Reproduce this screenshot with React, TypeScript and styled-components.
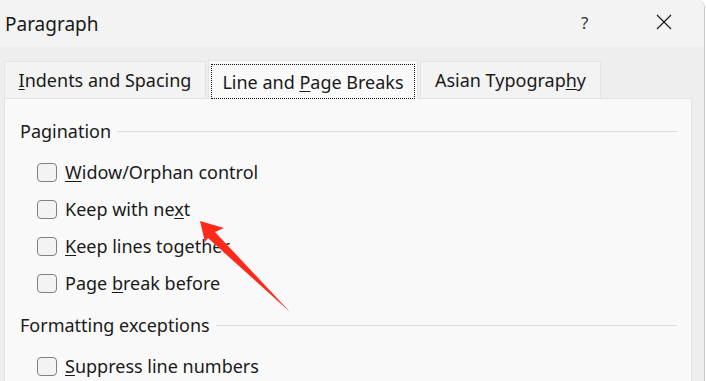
import React from "react";
import styled, { createGlobalStyle } from "styled-components";

const GlobalStyle = createGlobalStyle`
  html, body {
    margin: 0;
    padding: 0;
    background: #ffffff;
    overflow: hidden;
  }
  body {
    font-family: "Noto Sans", "Open Sans", sans-serif;
    color: #1a1a1a;
  }
`;

type Item = { before: string; key: string; after: string };

const pagination: Item[] = [
  { before: "", key: "W", after: "idow/Orphan control" },
  { before: "Keep with ne", key: "x", after: "t" },
  { before: "", key: "K", after: "eep lines together" },
  { before: "Page ", key: "b", after: "reak before" },
];

const exceptions: Item[] = [
  { before: "", key: "S", after: "uppress line numbers" },
];

const Label = ({ item }: { item: Item }) => (
  <span>
    {item.before}
    <U>{item.key}</U>
    {item.after}
  </span>
);

const App = () => {
  return (
    <Window>
      <GlobalStyle />
      <TitleBar>
        <Title>Paragraph</Title>
        <Help>?</Help>
        <Close>
          <svg width="16" height="16" viewBox="0 0 16 16">
            <path d="M1 1 L15 15 M15 1 L1 15" stroke="#1a1a1a" strokeWidth="1.2" fill="none" />
          </svg>
        </Close>
      </TitleBar>
      <Body>
        <Tabs>
          <Tab $width={202}>
            <Label item={{ before: "", key: "I", after: "ndents and Spacing" }} />
          </Tab>
          <ActiveTab>
            <Focus>
              <Label item={{ before: "Line and ", key: "P", after: "age Breaks" }} />
            </Focus>
          </ActiveTab>
          <Tab $width={181}>
            <Label item={{ before: "Asian Typograp", key: "h", after: "y" }} />
          </Tab>
        </Tabs>
        <Panel>
          <GroupHeader>
            <span>Pagination</span>
            <Rule />
          </GroupHeader>
          <List>
            {pagination.map((it, i) => (
              <Row key={i}>
                <Box />
                <Label item={it} />
              </Row>
            ))}
          </List>
          <GroupHeader $top={18}>
            <span>Formatting exceptions</span>
            <Rule />
          </GroupHeader>
          <List>
            {exceptions.map((it, i) => (
              <Row key={i}>
                <Box />
                <Label item={it} />
              </Row>
            ))}
          </List>
        </Panel>
      </Body>
      <Arrow width="706" height="381" viewBox="0 0 706 381">
        <polygon
          points="200,221 224,228 215,232 290,312 208,238 205,242"
          fill="#fd2a1c"
        />
      </Arrow>
    </Window>
  );
};

export default App;

const Window = styled.div`
  position: relative;
  width: 704px;
  height: 381px;
  border-right: 1px solid #c9c9c9;
  border-top-right-radius: 8px;
  overflow: hidden;
  background: #eeeeee;
`;

const TitleBar = styled.div`
  height: 47px;
  background: #f3f3f3;
  display: flex;
  align-items: center;
`;

const Title = styled.div`
  font-size: 19px;
  padding-left: 5px;
  flex: 1;
`;

const Help = styled.div`
  font-size: 17px;
  width: 12px;
  margin-right: 63px;
  margin-top: -2px;
  color: #333;
`;

const Close = styled.div`
  width: 16px;
  height: 16px;
  margin-right: 32px;
  margin-top: -4px;
  display: flex;
`;

const Body = styled.div`
  padding: 13px 0 0 4px;
`;

const Tabs = styled.div`
  display: flex;
  align-items: flex-end;
  gap: 2px;
  position: relative;
  z-index: 1;
`;

const Tab = styled.div<{ $width: number }>`
  box-sizing: border-box;
  width: ${(p) => p.$width}px;
  height: 37px;
  background: #f3f3f3;
  border: 1px solid #e4e4e4;
  border-bottom: none;
  font-size: 18px;
  display: flex;
  align-items: center;
  justify-content: center;
  white-space: nowrap;
`;

const ActiveTab = styled.div`
  box-sizing: border-box;
  width: 210px;
  height: 39px;
  background: #f9f9f9;
  border: 1px solid #e4e4e4;
  border-bottom: none;
  padding: 3px 2px 0 2px;
  display: flex;
  margin-bottom: -1px;
`;

const Focus = styled.div`
  flex: 1;
  border: 1px dotted #111;
  font-size: 18px;
  display: flex;
  align-items: center;
  justify-content: center;
  white-space: nowrap;
`;

const Panel = styled.div`
  width: 688px;
  height: 300px;
  box-sizing: border-box;
  background: #f9f9f9;
  border: 1px solid #e4e4e4;
  padding: 20px 14px 0 15px;
`;

const GroupHeader = styled.div<{ $top?: number }>`
  display: flex;
  align-items: center;
  font-size: 18px;
  height: 24px;
  margin-top: ${(p) => p.$top ?? 0}px;
`;

const Rule = styled.div`
  flex: 1;
  height: 1px;
  background: #dcdcdc;
  margin-left: 6px;
`;

const List = styled.div`
  display: flex;
  flex-direction: column;
  gap: 13px;
  padding: 17px 0 0 17px;
`;

const Row = styled.div`
  display: flex;
  align-items: center;
  gap: 8px;
  font-size: 18px;
  height: 24px;
`;

const Box = styled.div`
  box-sizing: border-box;
  width: 20px;
  height: 19px;
  border: 1px solid #808080;
  border-radius: 4px;
  background: #f3f3f3;
`;

const U = styled.span`
  text-decoration: underline;
  text-underline-offset: 2px;
  text-decoration-thickness: 1px;
`;

const Arrow = styled.svg`
  position: absolute;
  left: 0;
  top: 0;
  pointer-events: none;
`;
